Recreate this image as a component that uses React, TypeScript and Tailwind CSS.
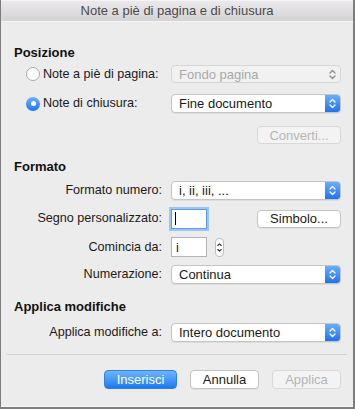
import React from 'react';

const font = { fontFamily: '"Liberation Sans", Arial, sans-serif' };

function Chevrons({ color = 'white' }: { color?: string }) {
  return (
    <svg width="7" height="11" viewBox="0 0 7 11" fill="none" stroke={color} strokeWidth="1.3" strokeLinecap="round" strokeLinejoin="round">
      <path d="M1 4 L3.5 1.5 L6 4" />
      <path d="M1 7 L3.5 9.5 L6 7" />
    </svg>
  );
}

function Select({ value, disabled }: { value: string; disabled?: boolean }) {
  if (disabled) {
    return (
      <div className="flex items-center w-[170px] h-[18px] rounded-[4px] border border-[#d6d6d6] bg-[#f1f1f1] text-[#a9a9a9] pl-[7px] pr-[4px]">
        <span className="flex-1 text-[13px] leading-none">{value}</span>
        <Chevrons color="#8c8c8c" />
      </div>
    );
  }
  return (
    <div className="flex items-center w-[170px] h-[19px] rounded-[4px] border border-[#c4c4c4] bg-white shadow-[0_1px_0_rgba(0,0,0,0.06)] overflow-hidden">
      <span className="flex-1 pl-[7px] text-[13px] leading-none text-[#1a1a1a]">{value}</span>
      <div className="w-[15px] h-full flex items-center justify-center bg-gradient-to-b from-[#68aef8] to-[#1c72ef]">
        <Chevrons />
      </div>
    </div>
  );
}

function Label({ children }: { children: React.ReactNode }) {
  return <div className="w-[161px] text-right text-[12.6px] text-[#1a1a1a] leading-none whitespace-nowrap">{children}</div>;
}

export default function App() {
  return (
    <div style={font} className="w-[355px] h-[409px] bg-[#7d7d7d] flex flex-col">
      <div className="ml-[1px] mr-[2px] mb-[2px] flex-1 flex flex-col bg-[#ececec] border-b border-[#f8f8f8]">
        {/* title bar */}
        <div className="h-[22px] flex items-center justify-center bg-gradient-to-b from-[#ebe9eb] to-[#d5d3d5] border-t border-[#f4f4f4] border-b border-[#b6b6b6] text-[13px] text-[#4b4b4b]">
          Note a piè di pagina e di chiusura
        </div>

        <div className="mt-[18px] pl-[13px] text-[13px] font-bold text-[#111] leading-[26px]">Posizione</div>

        <div className="mt-[-1px] flex items-center h-[18px]">
          <div className="ml-[25px] w-[14px] h-[14px] rounded-full border border-[#a8a8a8] bg-white" />
          <span className="ml-[3px] w-[119px] text-[12.6px] text-[#1a1a1a] leading-none whitespace-nowrap">Note a piè di pagina:</span>
          <div className="ml-[9px]"><Select value="Fondo pagina" disabled /></div>
        </div>

        <div className="mt-[11px] flex items-center h-[19px]">
          <div className="ml-[25px] w-[14px] h-[14px] rounded-full bg-gradient-to-b from-[#6ab0f9] to-[#1f74ef] flex items-center justify-center">
            <div className="w-[5px] h-[5px] rounded-full bg-white" />
          </div>
          <span className="ml-[3px] w-[119px] text-[12.6px] text-[#1a1a1a] leading-none whitespace-nowrap">Note di chiusura:</span>
          <div className="ml-[9px]"><Select value="Fine documento" /></div>
        </div>

        <div className="mt-[13px] flex justify-end pr-[12px]">
          <div className="w-[84px] h-[18px] rounded-[4px] border border-[#d8d8d8] bg-[#f3f3f3] flex items-center justify-center text-[13px] text-[#b5b5b5] leading-none">Converti...</div>
        </div>

        <div className="mt-[10px] pl-[13px] text-[13px] font-bold text-[#111] leading-[26px]">Formato</div>

        <div className="mt-[1px] flex items-center h-[19px]">
          <Label>Formato numero:</Label>
          <div className="ml-[9px]"><Select value="i, ii, iii, ..." /></div>
        </div>

        <div className="mt-[8px] flex items-center h-[21px]">
          <Label>Segno personalizzato:</Label>
          <div className="ml-[9px] w-[36px] h-[20px] bg-white border border-[#5e9ce6] shadow-[0_0_0_2px_#9cc6f2] flex items-start pl-[3px] pt-[2px]">
            <div className="w-[1px] h-[13px] bg-black" />
          </div>
          <div className="ml-[50px] w-[84px] h-[18px] rounded-[4px] border border-[#c6c6c6] bg-white shadow-[0_1px_0_rgba(0,0,0,0.05)] flex items-center justify-center text-[13px] text-[#1a1a1a] leading-none">Simbolo...</div>
        </div>

        <div className="mt-[8px] flex items-center h-[20px]">
          <Label>Comincia da:</Label>
          <div className="ml-[9px] w-[36px] h-[20px] bg-white border border-[#b4b4b4] flex items-center pl-[4px] text-[13px] text-[#1a1a1a] leading-none">i</div>
          <div className="ml-[8px] w-[9px] h-[19px] rounded-[4px] border border-[#bdbdbd] bg-white flex items-center justify-center">
            <svg width="5" height="11" viewBox="0 0 5 11" fill="none" stroke="#333" strokeWidth="1.1" strokeLinecap="round" strokeLinejoin="round">
              <path d="M0.8 3.5 L2.5 1.8 L4.2 3.5" />
              <path d="M0.8 7.5 L2.5 9.2 L4.2 7.5" />
            </svg>
          </div>
        </div>

        <div className="mt-[8px] flex items-center h-[19px]">
          <Label>Numerazione:</Label>
          <div className="ml-[9px]"><Select value="Continua" /></div>
        </div>

        <div className="mt-[10px] pl-[13px] text-[13px] font-bold text-[#111] leading-[26px]">Applica modifiche</div>

        <div className="mt-[3px] flex items-center h-[19px]">
          <Label>Applica modifiche a:</Label>
          <div className="ml-[9px]"><Select value="Intero documento" /></div>
        </div>

        <div className="mt-[12px] mx-[6px] h-[1px] bg-[#d2d2d2]" />

        <div className="mt-[15px] flex justify-end items-center gap-[13px] pr-[12px]">
          <div className="w-[73px] h-[19px] rounded-[4px] bg-gradient-to-b from-[#6db5fb] to-[#1a78f1] border border-[#2f7fe6] flex items-center justify-center text-[13px] text-white leading-none">Inserisci</div>
          <div className="w-[69px] h-[19px] rounded-[4px] border border-[#c4c4c4] bg-white shadow-[0_1px_0_rgba(0,0,0,0.05)] flex items-center justify-center text-[13px] text-[#1a1a1a] leading-none">Annulla</div>
          <div className="w-[69px] h-[19px] rounded-[4px] border border-[#d8d8d8] bg-[#f3f3f3] flex items-center justify-center text-[13px] text-[#b5b5b5] leading-none">Applica</div>
        </div>
      </div>
    </div>
  );
}
